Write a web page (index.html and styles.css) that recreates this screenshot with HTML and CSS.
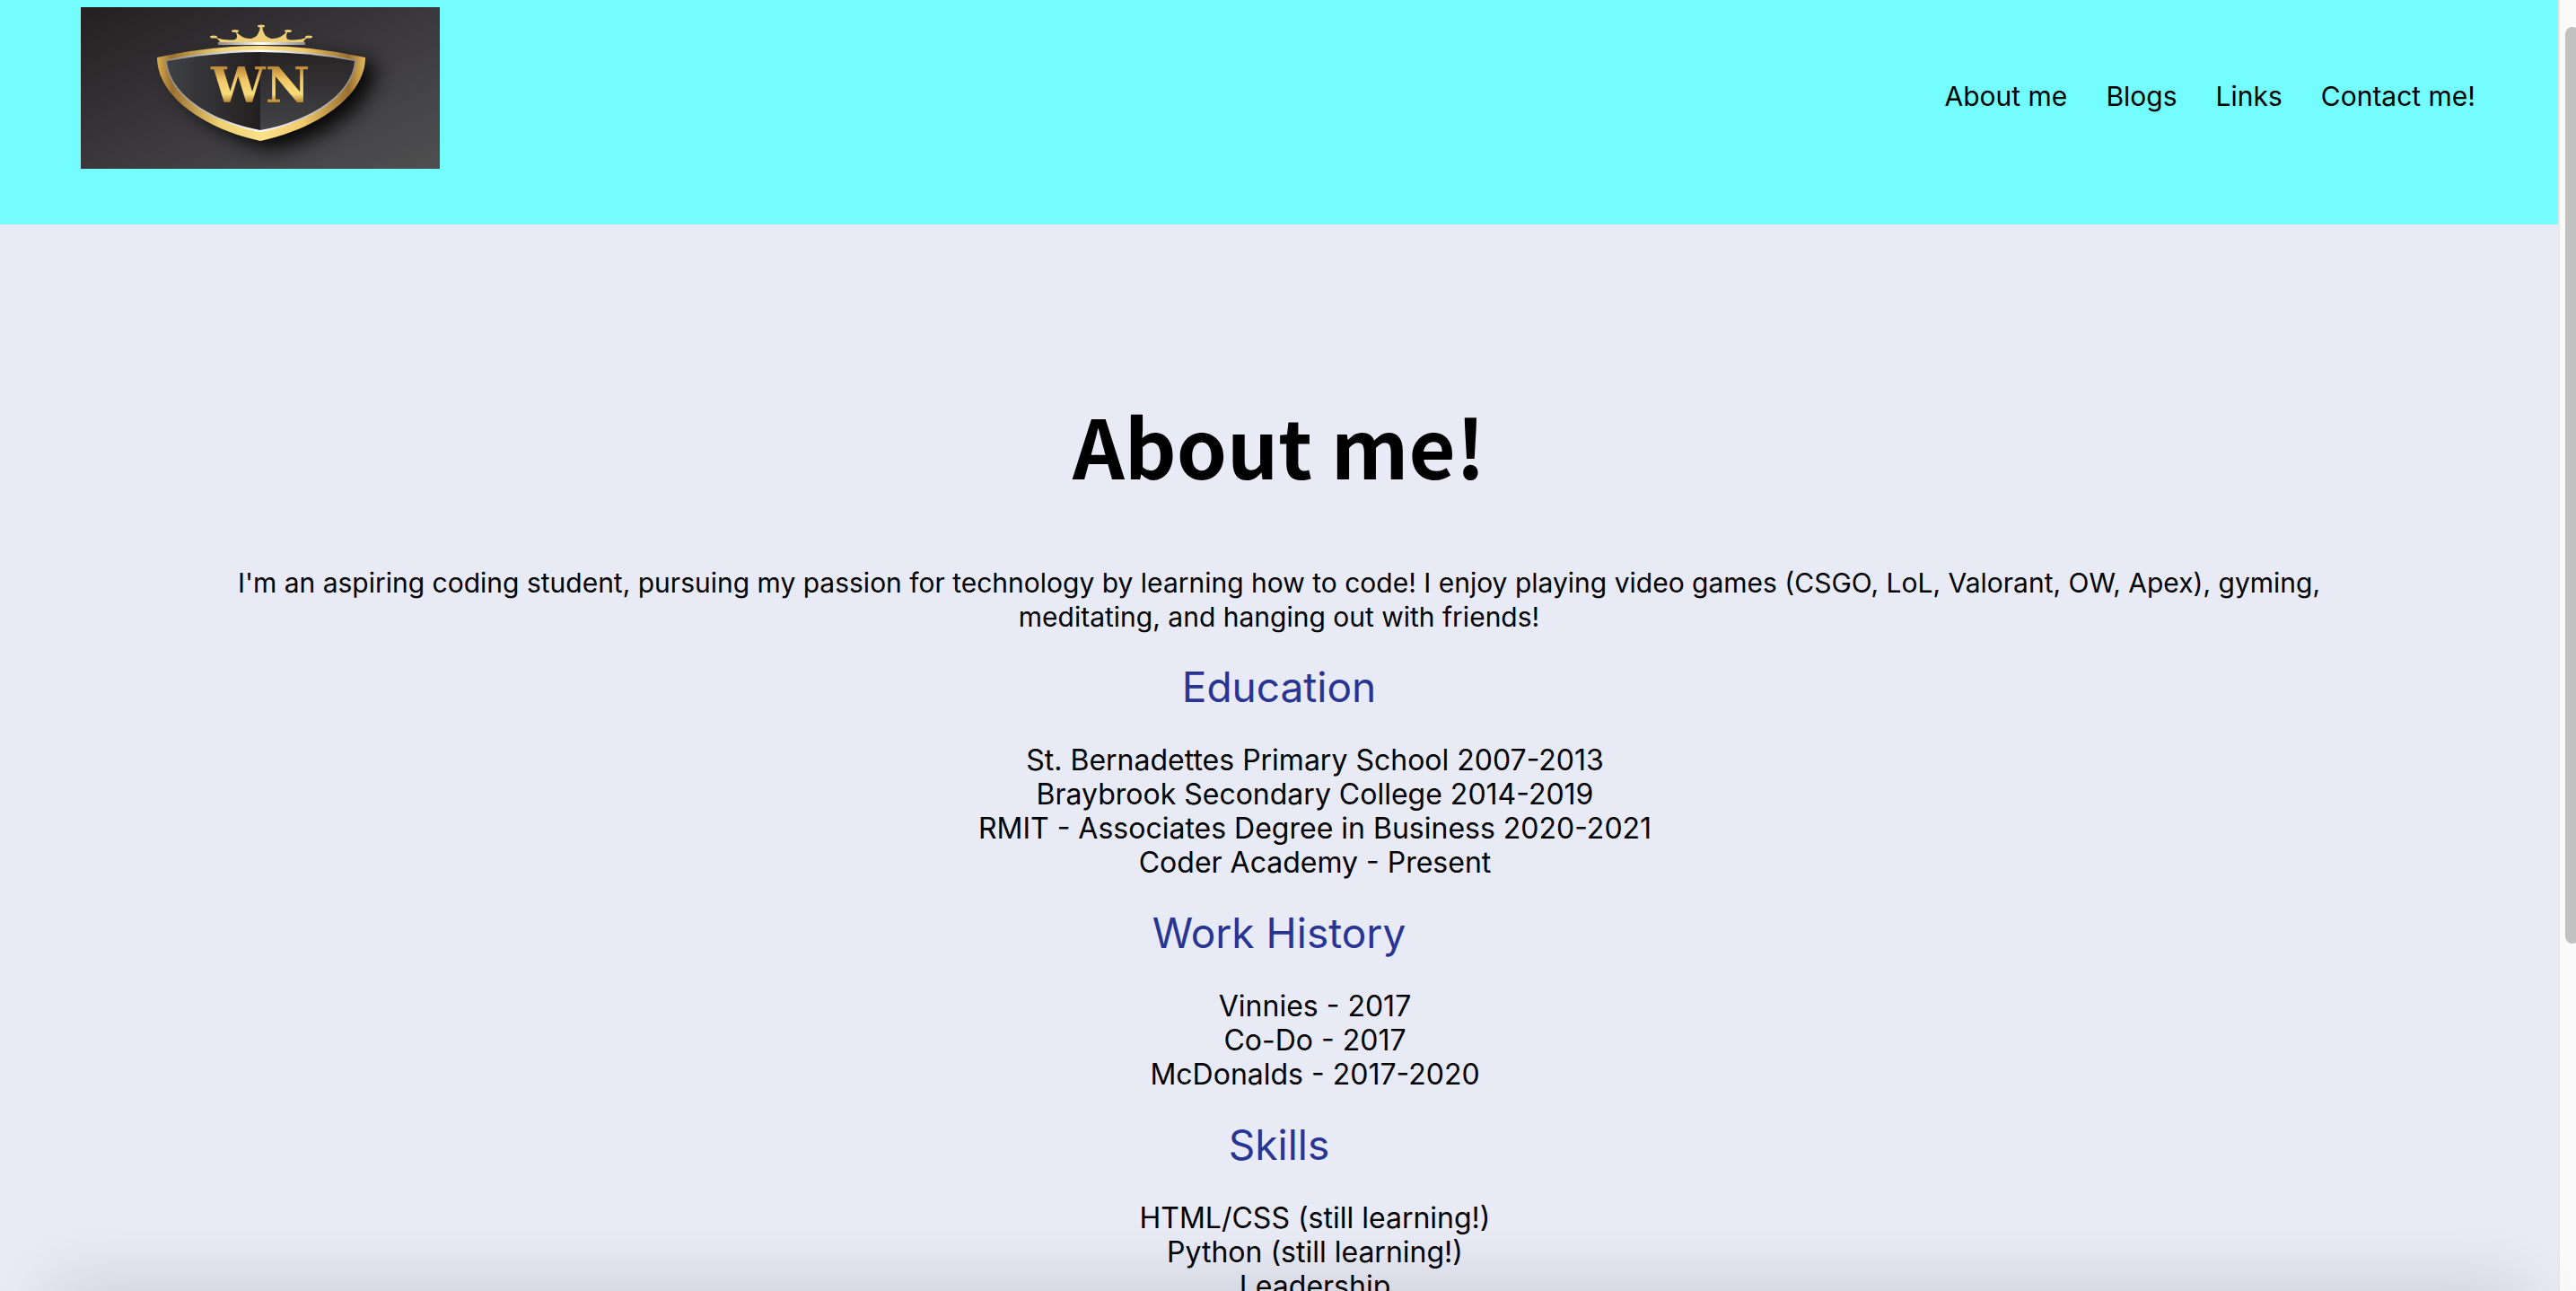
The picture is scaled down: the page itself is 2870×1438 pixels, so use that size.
FILE: index.html
```html
<!DOCTYPE html>
<html lang="en">
<head>
  <meta charset="utf-8">
  <meta name="viewport" content="width=device-width, initial-scale=1">
  <title>About me</title>
  <link rel="stylesheet" href="styles.css">
</head>
<body>
  <div class="page">
    <header class="site-header">
      <a class="logo" href="#" aria-label="Home">
        <svg class="logo-art" viewBox="0 0 400 180" aria-hidden="true">
          <defs>
            <linearGradient id="plate" x1="0" y1="0" x2="1" y2="1">
              <stop offset="0" stop-color="#232021"/>
              <stop offset=".5" stop-color="#3a383b"/>
              <stop offset="1" stop-color="#4f4f50"/>
            </linearGradient>
            <linearGradient id="rim" x1="0" y1="0" x2="1" y2="0">
              <stop offset="0" stop-color="#d9ae4e"/>
              <stop offset=".07" stop-color="#9a7030"/>
              <stop offset=".3" stop-color="#f0d070"/>
              <stop offset=".5" stop-color="#fbe08a"/>
              <stop offset=".7" stop-color="#f2ca68"/>
              <stop offset=".92" stop-color="#9a6e30"/>
              <stop offset="1" stop-color="#e2b95a"/>
            </linearGradient>
            <linearGradient id="silver" x1="0" y1="0" x2="1" y2="0">
              <stop offset="0" stop-color="#8d8a88"/>
              <stop offset=".5" stop-color="#ffffff"/>
              <stop offset="1" stop-color="#8d8a88"/>
            </linearGradient>
            <linearGradient id="left-face" x1="0" y1="0" x2="1" y2="0">
              <stop offset="0" stop-color="#3f4144"/>
              <stop offset="1" stop-color="#231f20"/>
            </linearGradient>
            <linearGradient id="right-face" x1="0" y1="0" x2="0" y2="1">
              <stop offset="0" stop-color="#272425"/>
              <stop offset="1" stop-color="#434345"/>
            </linearGradient>
            <linearGradient id="letters" x1="0" y1="0" x2="0" y2="1">
              <stop offset=".2" stop-color="#c08c3c"/>
              <stop offset=".4" stop-color="#f0c566"/>
              <stop offset=".65" stop-color="#f6dc7c"/>
              <stop offset=".8" stop-color="#b5812f"/>
            </linearGradient>
            <filter id="soft" x="-30%" y="-30%" width="160%" height="160%">
              <feGaussianBlur stdDeviation="11"/>
            </filter>
          </defs>
          <rect width="400" height="180" fill="url(#plate)"/>
          <path d="M100 70Q215 44 328 62C332 108 268 150 212 158C160 146 110 112 100 70Z" fill="#050505" opacity=".9" filter="url(#soft)"/>
          <path d="M85 56Q200 30 317 56C317 100 261 136 200 149C139 136 85 100 85 56Z" fill="url(#rim)"/>
          <path d="M94 59Q200 36 307 59C304 98 256 129 200 139C144 129 97 98 94 59Z" fill="url(#silver)"/>
          <path d="M96 60Q150 50 200 50V137C146 127 99 98 96 60Z" fill="url(#left-face)"/>
          <path d="M200 50Q252 50 305 60C302 98 254 127 200 137Z" fill="url(#right-face)"/>
          <path d="M153 40L155 38Q153 35 148 33Q162 38 172 36Q176 34 172 26Q180 36 190 35Q199 33 200 21H202Q203 33 212 35Q222 36 231 26Q227 34 231 36Q241 38 254 33Q250 35 248 38L250 40Z" fill="#f0cf78"/>
          <g fill="#f0cf78">
            <ellipse cx="148" cy="33" rx="4" ry="1.5"/>
            <ellipse cx="172" cy="26.5" rx="4" ry="1.5"/>
            <ellipse cx="201" cy="21" rx="4" ry="1.5"/>
            <ellipse cx="231" cy="26.5" rx="4" ry="1.5"/>
            <ellipse cx="254" cy="33" rx="4" ry="1.5"/>
          </g>
          <rect x="153" y="39" width="97" height="3" fill="url(#silver)"/>
          <text class="monogram" x="200" y="106" text-anchor="middle" fill="url(#letters)">WN</text>
        </svg>
      </a>
      <nav class="site-nav" aria-label="Main">
        <a href="#about">About me</a>
        <a href="#blogs">Blogs</a>
        <a href="#links">Links</a>
        <a href="#contact">Contact me!</a>
      </nav>
    </header>

    <main class="about" id="about">
      <h1>About me!</h1>
      <p>I'm an aspiring coding student, pursuing my passion for technology by learning how to code! I enjoy playing video games (CSGO, LoL, Valorant, OW, Apex), gyming, meditating, and hanging out with friends!</p>

      <h2>Education</h2>
      <ul>
        <li>St. Bernadettes Primary School 2007-2013</li>
        <li>Braybrook Secondary College 2014-2019</li>
        <li>RMIT - Associates Degree in Business 2020-2021</li>
        <li>Coder Academy - Present</li>
      </ul>

      <h2>Work History</h2>
      <ul>
        <li>Vinnies - 2017</li>
        <li>Co-Do - 2017</li>
        <li>McDonalds - 2017-2020</li>
      </ul>

      <h2>Skills</h2>
      <ul>
        <li>HTML/CSS (still learning!)</li>
        <li>Python (still learning!)</li>
        <li>Leadership</li>
      </ul>
    </main>
  </div>

  <div class="scroll-track" aria-hidden="true"><div class="scroll-thumb"></div></div>
  <div class="window-shade" aria-hidden="true"></div>
</body>
</html>
```
FILE: styles.css
```css
* {
  box-sizing: border-box;
}

body {
  display: flex;
  height: 100vh;
  margin: 0;
  overflow: hidden;
  background: #e8eaf6;
  color: #000;
  font-family: Inter, Roboto, sans-serif;
  font-size: 30px;
  line-height: 38px;
}

.page {
  flex: 1;
  min-width: 0;
}

/* Header */
.site-header {
  display: flex;
  justify-content: space-between;
  align-items: center;
  padding: 8px 92px 62px 90px;
  background: #73fdff;
}

.logo,
.logo-art {
  display: block;
}

.logo-art {
  width: 400px;
  height: 180px;
}

.monogram {
  font-family: "DejaVu Serif", serif;
  font-size: 54px;
  font-weight: 700;
}

.site-nav {
  display: flex;
  gap: 43px;
  margin-top: 18px;
}

.site-nav a {
  color: inherit;
  text-decoration: none;
}

/* Profile */
.about {
  padding: 180px 236px 0;
  text-align: center;
}

h1 {
  margin: 0 0 70px;
  font-family: "Noto Sans CJK SC", sans-serif;
  font-size: 90px;
  font-weight: 700;
  line-height: 130px;
}

p {
  margin: 0;
}

h2 {
  margin: 31px 0 35px;
  color: #283593;
  font-size: 46px;
  font-weight: 400;
  line-height: 56px;
}

ul {
  margin: 0;
  padding: 0 0 0 80px;
  list-style: none;
  font-size: 32px;
}

/* Scroll bar at the window's right edge */
.scroll-track {
  flex: none;
  width: 20px;
  padding: 30px 0 0 6px;
  overflow: hidden;
  border-left: 2px solid #e8e8e8;
  background: #fafafa;
}

.scroll-thumb {
  width: 16px;
  height: 71vh;
  border-radius: 8px;
  background: #c1c1c1;
}

/* Shade rising from the window's bottom edge */
.window-shade {
  position: fixed;
  right: 80px;
  bottom: -40px;
  left: 80px;
  height: 20px;
  box-shadow: 0 0 80px 20px rgba(0, 0, 0, 0.16);
}
```
